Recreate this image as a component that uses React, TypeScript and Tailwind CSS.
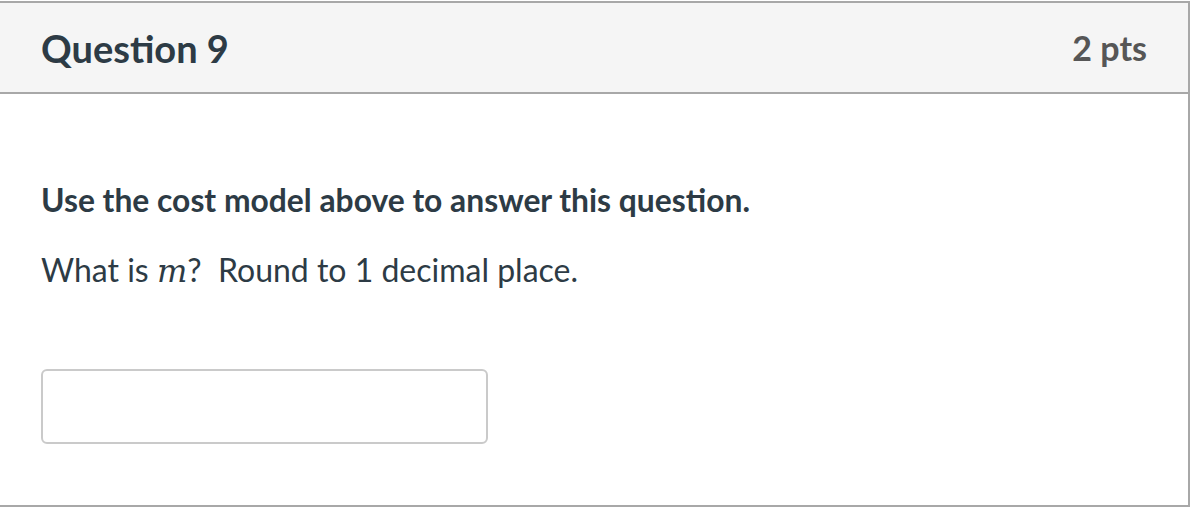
export default function App() {
  return (
    <div
      className="w-[1195px] h-[515px] bg-white overflow-hidden pt-px"
      style={{ fontFamily: "Lato, 'Open Sans', sans-serif" }}
    >
      <div className="ml-[-2px] w-[1192px] border-2 border-[#a8a8a8]">
        {/* header */}
        <div className="h-[91px] bg-[#f5f5f5] border-b-2 border-[#a8a8a8] flex items-center justify-between pl-[41px] pr-[41px]">
          <h2 className="text-[38px] font-bold text-[#2d3b45] leading-none">Question 9</h2>
          <span className="text-[34px] font-bold text-[#565656] leading-none">2 pts</span>
        </div>

        {/* body */}
        <div className="pl-[41px] pt-[86px] pb-[61px] text-[#2d3b45] text-[32px]">
          <p className="font-bold text-[31.8px] leading-[40px]">Use the cost model above to answer this question.</p>
          <p className="mt-[30px] leading-[40px]">
            What is{" "}
            <span className="italic text-[32px]" style={{ fontFamily: "'DejaVu Serif', serif" }}>
              m
            </span>
            ?&nbsp; Round to 1 decimal place.
          </p>
          <input
            type="text"
            className="block mt-[78px] w-[447px] h-[75px] border-2 border-[#cacaca] rounded-[6px] bg-white"
          />
        </div>
      </div>
    </div>
  );
}
